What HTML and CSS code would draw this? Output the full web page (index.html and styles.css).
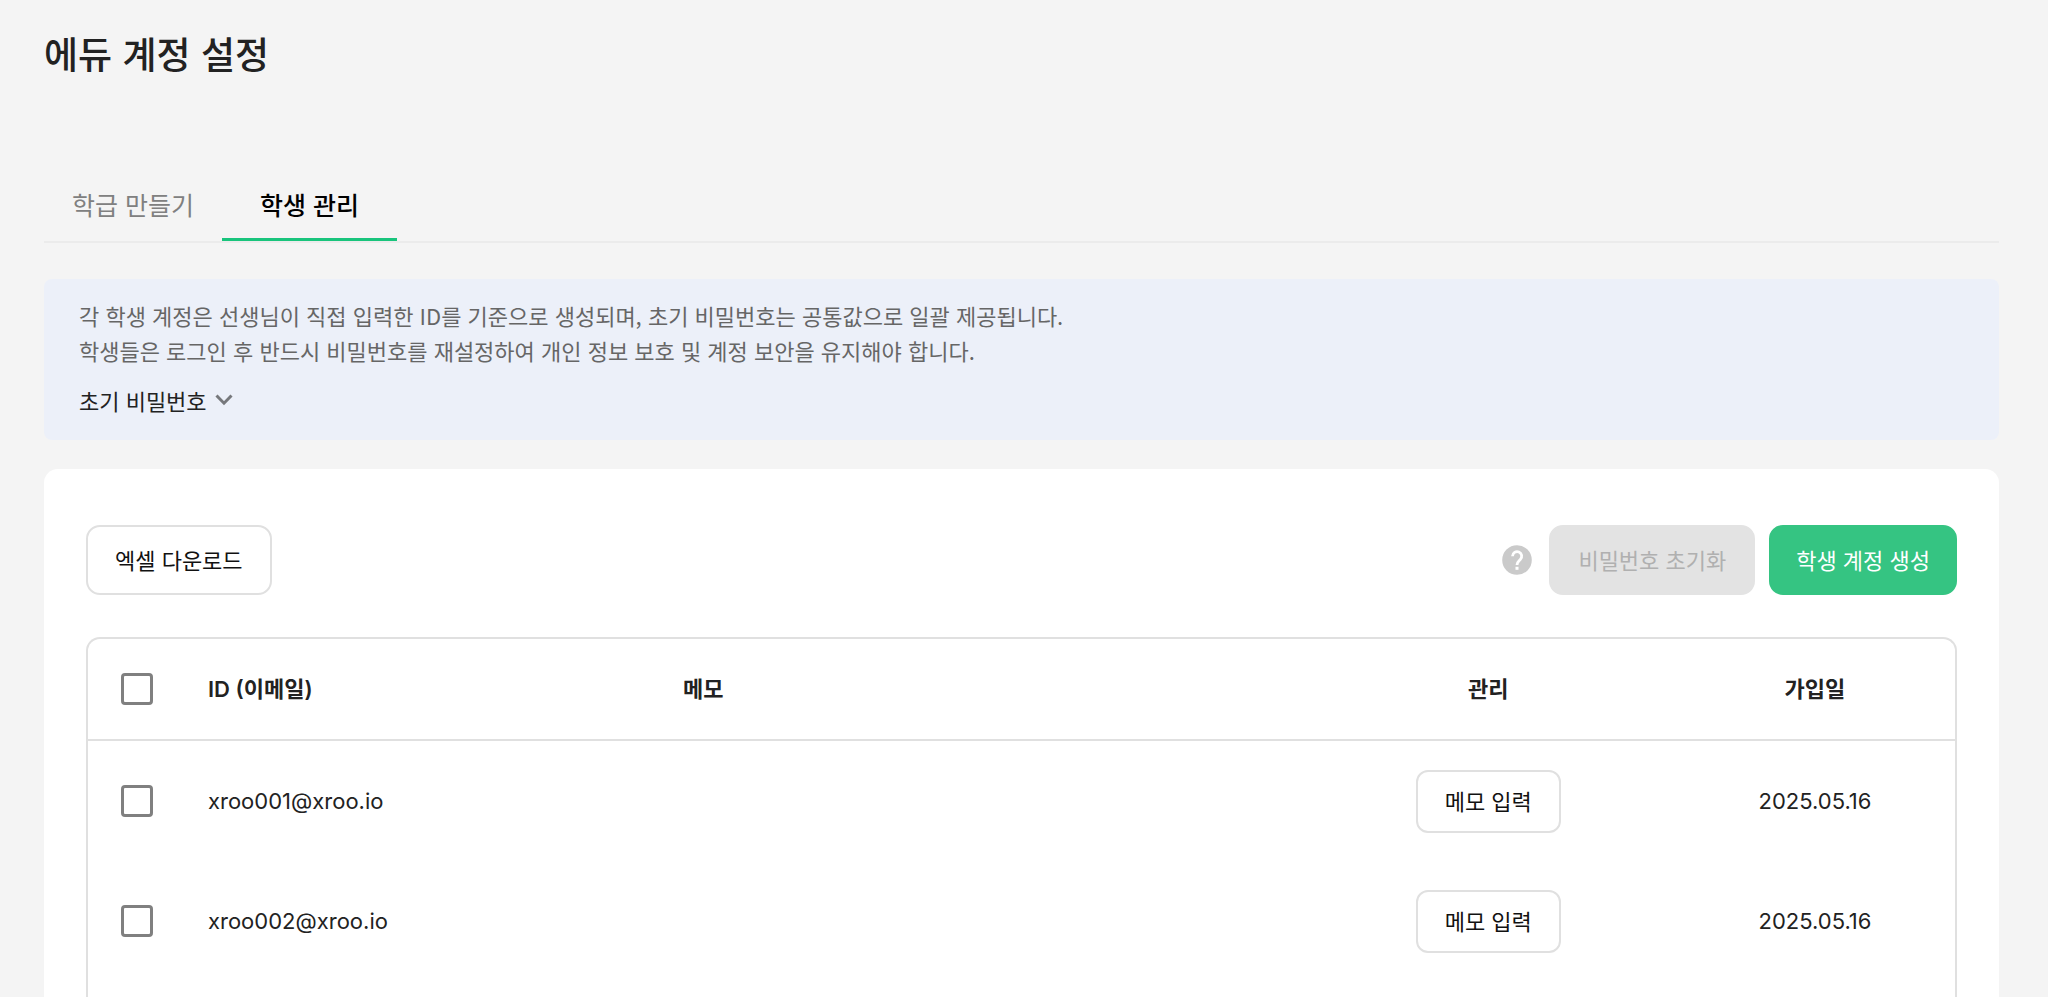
FILE: index.html
```html
<!DOCTYPE html>
<html lang="ko">
<head>
  <meta charset="UTF-8" />
  <meta name="viewport" content="width=device-width, initial-scale=1.0"/>
  <title>에듀 계정 설정</title>
  <link rel="stylesheet" href="styles.css">
</head>
<body>
  <div class="container">
    <h1>에듀 계정 설정</h1>

    <nav class="tabs">
      <a href="#class" class="tab">학급 만들기</a>
      <a href="#students" class="tab active">학생 관리</a>
    </nav>

    <div class="notice">
      <p>각 학생 계정은 선생님이 직접 입력한 ID를 기준으로 생성되며, 초기 비밀번호는 공통값으로 일괄 제공됩니다.</p>
      <p>학생들은 로그인 후 반드시 비밀번호를 재설정하여 개인 정보 보호 및 계정 보안을 유지해야 합니다.</p>
      <button type="button" class="notice-toggle">
        초기 비밀번호
        <svg width="18" height="12" viewBox="0 0 18 12" fill="none" stroke="#76787c" stroke-width="3" aria-hidden="true">
          <path d="M1.5 1.5 9 9.2l7.500-7.700"/>
        </svg>
      </button>
    </div>

    <div class="card">
      <div class="toolbar">
        <button type="button" class="btn">엑셀 다운로드</button>
        <div class="toolbar-right">
          <button type="button" class="help" aria-label="도움말">
            <svg width="30" height="30" viewBox="0 0 30 30" aria-hidden="true">
              <circle cx="15" cy="15" r="14.800" fill="#cacaca"/>
              <path d="M10.500 11.200a4.600 4.600 0 1 1 7.800 3.300c-1.900 1.900-3.300 2.500-3.300 5.500" fill="none" stroke="#fff" stroke-width="2.800"/>
              <rect x="13.500" y="21.800" width="3" height="3" fill="#fff"/>
            </svg>
          </button>
          <button type="button" class="btn btn-disabled" disabled>비밀번호 초기화</button>
          <button type="button" class="btn btn-primary">학생 계정 생성</button>
        </div>
      </div>

      <div class="table-box">
        <table>
          <colgroup>
            <col class="col-check">
            <col class="col-id">
            <col>
            <col class="col-manage">
            <col class="col-date">
          </colgroup>
          <thead>
            <tr>
              <th class="check"><input type="checkbox" aria-label="전체 선택"></th>
              <th>ID (이메일)</th>
              <th>메모</th>
              <th class="center">관리</th>
              <th class="center">가입일</th>
            </tr>
          </thead>
          <tbody>
            <tr>
              <td class="check"><input type="checkbox" aria-label="xroo001@xroo.io 선택"></td>
              <td>xroo001@xroo.io</td>
              <td></td>
              <td class="center"><button type="button" class="btn btn-small">메모 입력</button></td>
              <td class="center">2025.05.16</td>
            </tr>
            <tr>
              <td class="check"><input type="checkbox" aria-label="xroo002@xroo.io 선택"></td>
              <td>xroo002@xroo.io</td>
              <td></td>
              <td class="center"><button type="button" class="btn btn-small">메모 입력</button></td>
              <td class="center">2025.05.16</td>
            </tr>
          </tbody>
        </table>
      </div>
    </div>
  </div>
</body>
</html>
```
FILE: styles.css
```css
* {
  box-sizing: border-box;
}

body {
  font-family: "Noto Sans CJK KR", sans-serif;
  font-size: 22px;
  color: #222;
  background: #f4f4f4;
  margin: 0;
}

.container {
  display: flex;
  flex-direction: column;
  min-height: 100vh;
  padding: 27px 49px 0 44px;
}

h1 {
  margin: 0;
  font-size: 37px;
  font-weight: 500;
  line-height: 52px;
}

.tabs {
  display: flex;
  margin-top: 93px;
  border-bottom: 2px solid #ebebeb;
}

.tab {
  padding: 14px 28px 16px;
  font-size: 25px;
  line-height: 36px;
  color: #808080;
  text-decoration: none;
  border-bottom: 3px solid transparent;
}

.tab.active {
  padding: 14px 38px 16px;
  color: #000;
  font-weight: 500;
  border-bottom-color: #18c47c;
}

.notice {
  margin-top: 36px;
  padding: 19px 35px 22px;
  background: #ecf0f9;
  border-radius: 8px;
}

.notice p {
  margin: 0;
  line-height: 35px;
  color: #666;
}

.notice-toggle {
  display: flex;
  align-items: center;
  gap: 8px;
  margin-top: 14px;
  padding: 0;
  font: inherit;
  line-height: 36px;
  color: #222;
  background: none;
  border: none;
  cursor: pointer;
}

.card {
  display: flex;
  flex-direction: column;
  flex: 1;
  margin-top: 29px;
  padding: 56px 42px 0;
  background: white;
  border-radius: 14px 14px 0 0;
}

.toolbar,
.toolbar-right {
  display: flex;
  align-items: center;
}

.toolbar {
  justify-content: space-between;
}

.toolbar-right {
  gap: 14px;
}

.btn {
  height: 70px;
  padding: 0 27px 2px;
  font: inherit;
  color: #111;
  background: white;
  border: 2px solid #e0e0e0;
  border-radius: 14px;
  cursor: pointer;
}

.btn-disabled {
  color: #b0b0b0;
  background: #e3e3e3;
  border-color: #e3e3e3;
  cursor: default;
}

.btn-primary {
  padding: 0 25px 2px;
  color: white;
  background: #35c482;
  border-color: #35c482;
}

.btn-small {
  height: 63px;
  font-family: "Noto Sans CJK KR", sans-serif;
  border-radius: 12px;
}

.help {
  display: flex;
  margin-right: 3px;
  padding: 0;
  background: none;
  border: none;
  cursor: pointer;
}

.table-box {
  flex: 1;
  margin-top: 42px;
  border: 2px solid #e0e0e0;
  border-bottom: none;
  border-radius: 14px 14px 0 0;
}

table {
  width: 100%;
  font-family: Inter, "Noto Sans CJK KR", sans-serif;
  table-layout: fixed;
  border-collapse: separate;
  border-spacing: 0;
}

.col-check {
  width: 120px;
}

.col-id {
  width: 475px;
}

.col-manage {
  width: 20%;
}

.col-date {
  width: 15%;
}

th,
td {
  padding: 0;
  text-align: left;
}

th {
  height: 102px;
  padding-bottom: 4px;
  font-weight: 600;
  border-bottom: 2px solid #e0e0e0;
}

td {
  height: 120px;
}

.check {
  padding: 0 0 0 33px;
}

.center {
  text-align: center;
}

input[type="checkbox"] {
  display: block;
  width: 32px;
  height: 32px;
  margin: 0;
  appearance: none;
  background: white;
  border: 3px solid #808080;
  border-radius: 4px;
}

input[type="checkbox"]:checked {
  background: #35c482;
}
```
